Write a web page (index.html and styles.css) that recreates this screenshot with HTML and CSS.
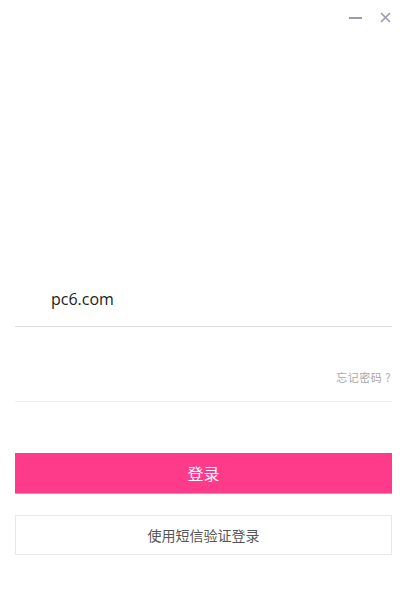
FILE: index.html
```html
<!DOCTYPE html>
<html lang="zh-CN">
<head>
    <meta charset="UTF-8">
    <meta name="viewport" content="width=device-width, initial-scale=1.0">
    <title>登录</title>
    <link rel="stylesheet" href="styles.css">
</head>
<body>
    <div class="window">
        <div class="titlebar">
            <span class="win-btn minimize" title="最小化"></span>
            <span class="win-btn close" title="关闭">
                <svg width="11" height="11" viewBox="0 0 11 11">
                    <path d="M1 1 L10 10 M10 1 L1 10" stroke="#9a9cae" stroke-width="1.7" fill="none"/>
                </svg>
            </span>
        </div>

        <div class="form">
            <div class="field username">
                <input type="text" value="pc6.com">
            </div>
            <div class="field password">
                <input type="password" value="">
                <a class="forgot" href="#">忘记密码 ?</a>
            </div>

            <button class="btn-login">登录</button>
            <button class="btn-sms">使用短信验证登录</button>
        </div>
    </div>
</body>
</html>
```

FILE: styles.css
```css
* {
    box-sizing: border-box;
}

body {
    margin: 0;
    background: #fff;
    font-family: "Noto Sans CJK SC", "Microsoft YaHei", sans-serif;
}

.window {
    width: 408px;
    height: 600px;
    display: flex;
    flex-direction: column;
}

.titlebar {
    height: 35px;
    display: flex;
    justify-content: flex-end;
    align-items: center;
    gap: 18px;
    padding-right: 17px;
}

.win-btn {
    height: 13px;
    display: flex;
    align-items: center;
    justify-content: center;
    cursor: pointer;
}

.minimize {
    width: 13px;
}

.close {
    width: 11px;
}

.minimize::before {
    content: "";
    width: 13px;
    height: 2px;
    background: #9a9cae;
}

.form {
    margin-top: auto;
    padding: 0 16px 45px 15px;
    display: flex;
    flex-direction: column;
}

.field {
    display: flex;
    align-items: center;
    border-bottom: 1px solid #dcdcdc;
}

.field input {
    flex: 1;
    border: none;
    outline: none;
    background: transparent;
    padding: 0 0 0 36px;
    font-family: "Open Sans", "Noto Sans", sans-serif;
    font-size: 16px;
    color: #222;
}

.username {
    height: 49px;
    padding-bottom: 6px;
}

.password {
    height: 75px;
    padding-top: 26px;
    border-bottom-color: #eeeeee;
}

.forgot {
    font-size: 11px;
    color: #a8a8a8;
    text-decoration: none;
    margin-right: 1px;
    letter-spacing: 0.5px;
}

.btn-login {
    margin-top: 51px;
    height: 40px;
    border: none;
    background: #fd3b8a;
    box-shadow: 0 1px 0 #f987b6;
    color: #fff;
    font-family: inherit;
    font-size: 16px;
    cursor: pointer;
}

.btn-sms {
    margin-top: 22px;
    height: 40px;
    border: 1px solid #e8e8e8;
    background: #fff;
    color: #555;
    font-family: inherit;
    font-size: 14px;
    cursor: pointer;
}
```
